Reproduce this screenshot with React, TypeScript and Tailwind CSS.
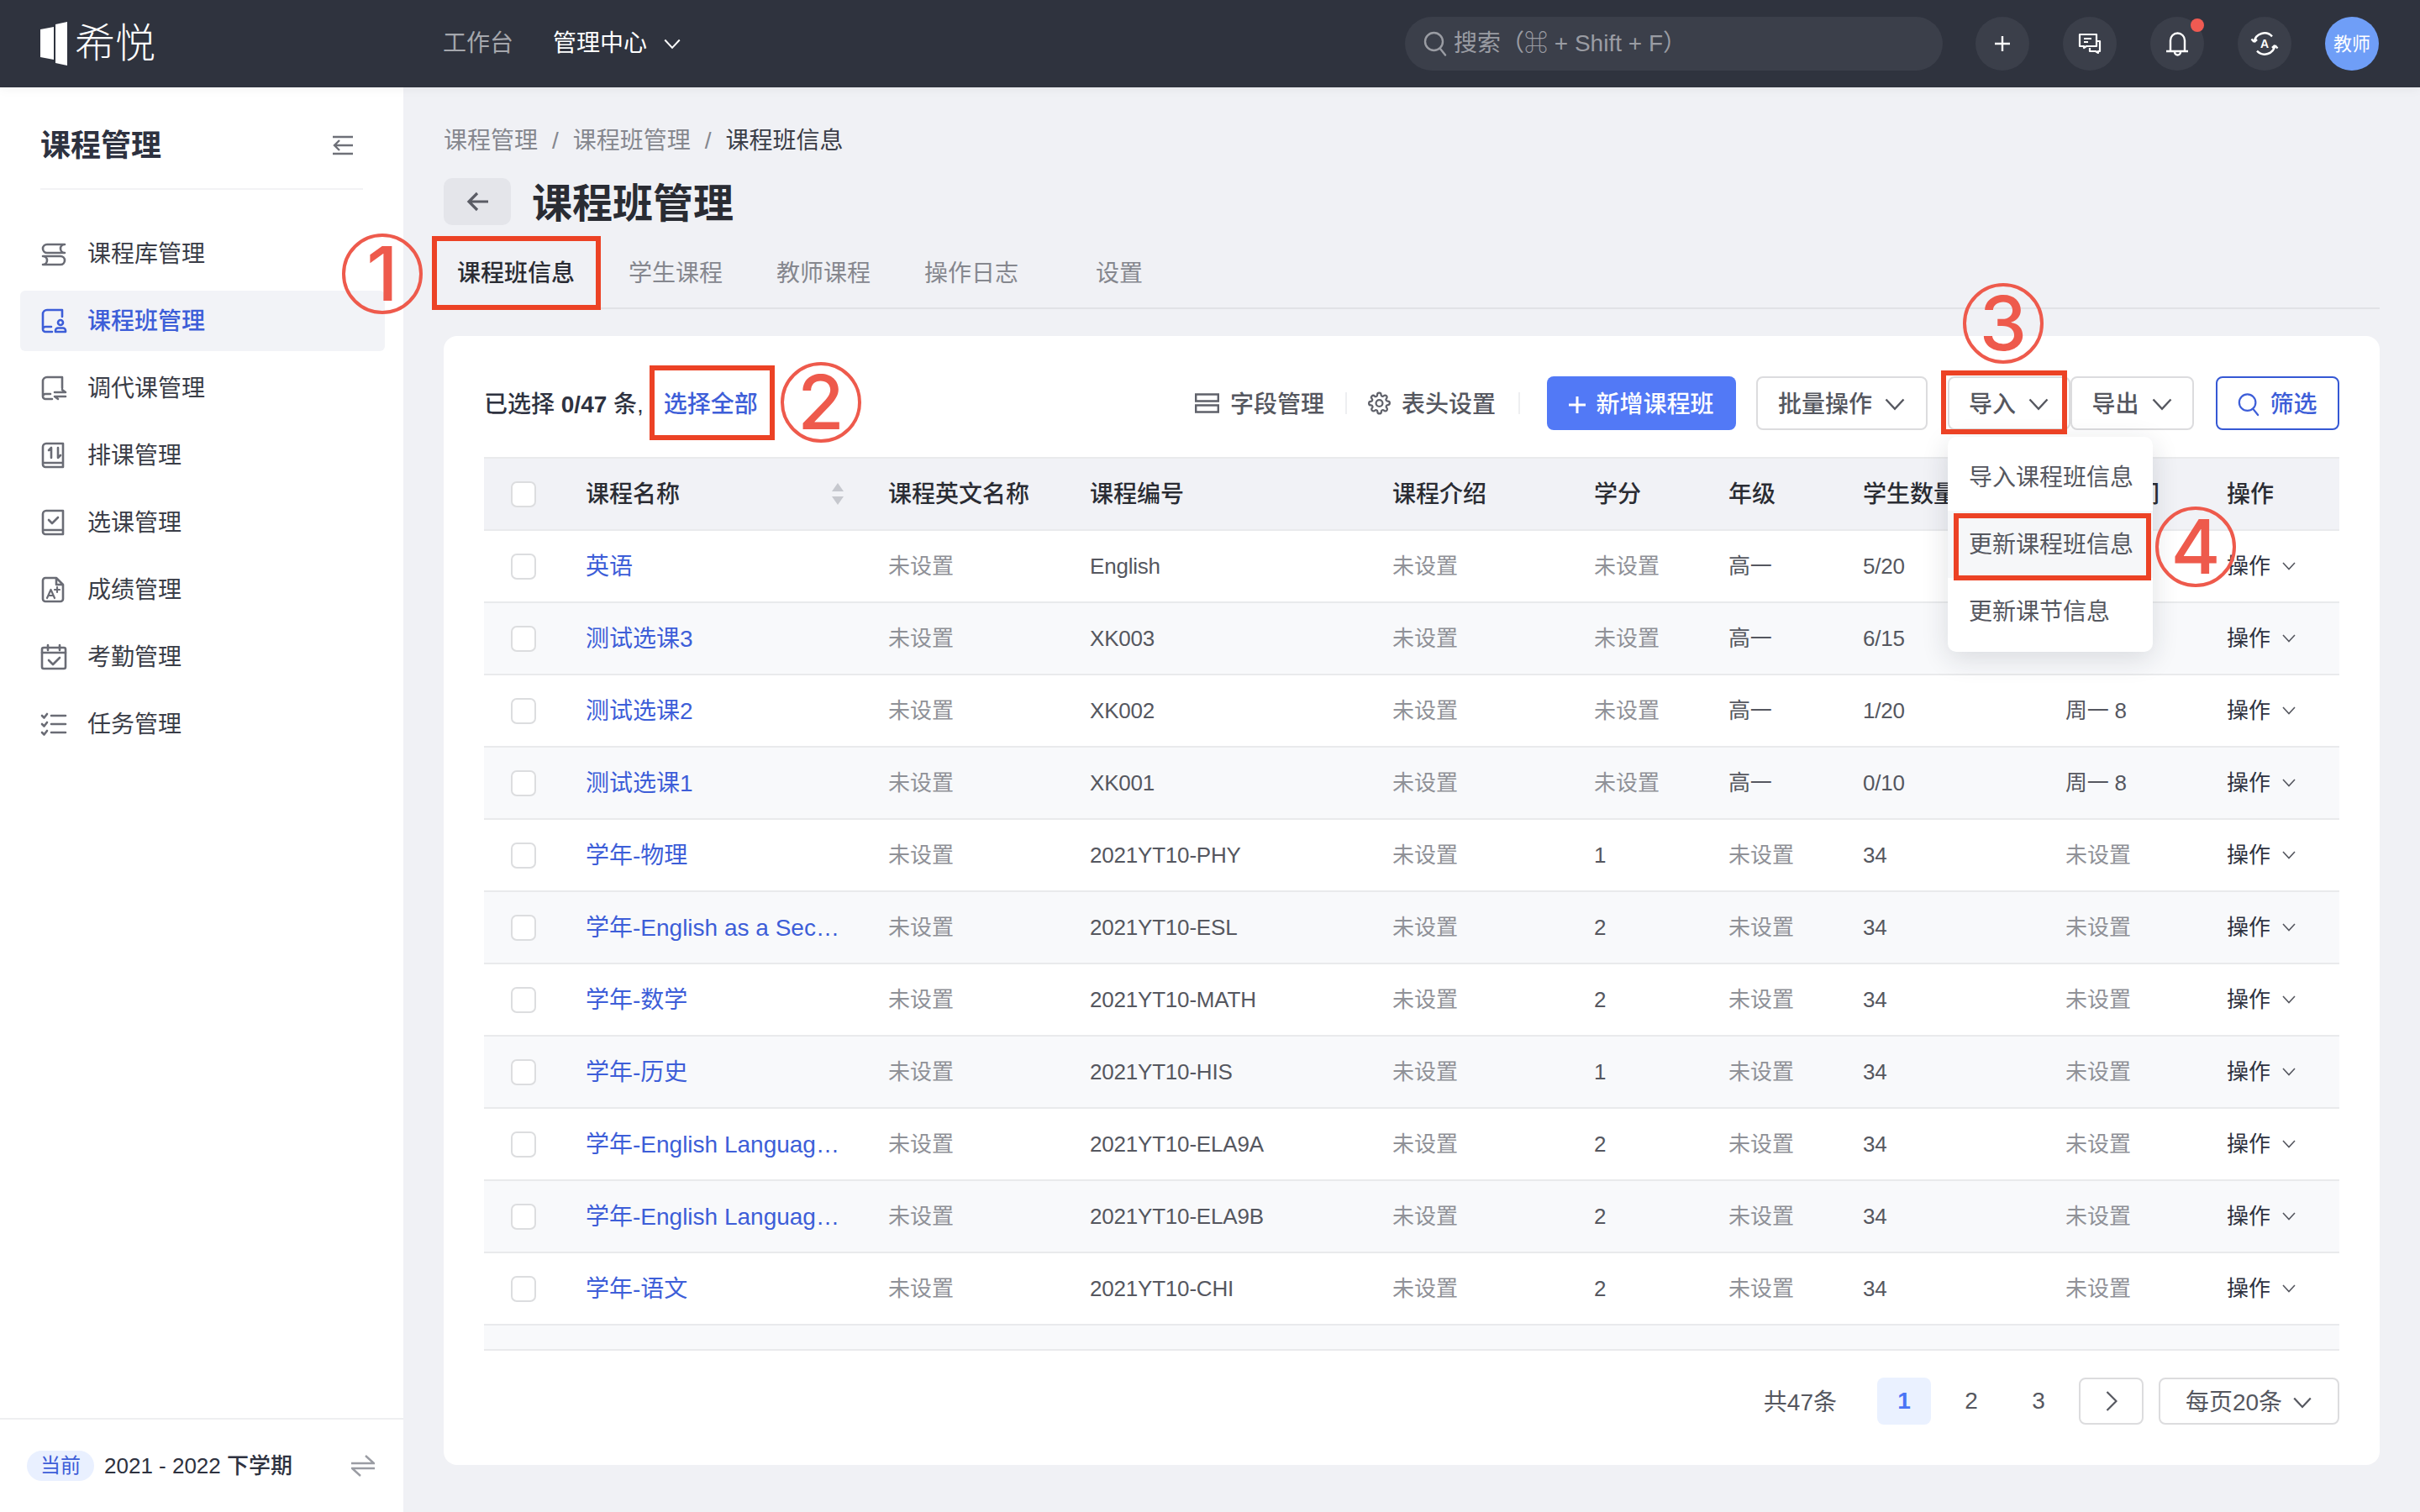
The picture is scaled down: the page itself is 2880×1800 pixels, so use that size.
import React from "react";

const MENU = [
  { label: "课程库管理", icon: "library" },
  { label: "课程班管理", icon: "classes", active: true },
  { label: "调代课管理", icon: "swap" },
  { label: "排课管理", icon: "sort" },
  { label: "选课管理", icon: "check" },
  { label: "成绩管理", icon: "grade" },
  { label: "考勤管理", icon: "calendar" },
  { label: "任务管理", icon: "tasks" },
];

const TABS = ["课程班信息", "学生课程", "教师课程", "操作日志"];

const NA = "未设置";

const ROWS = [
  ["英语", NA, "English", NA, NA, "高一", "5/20", "周一 8"],
  ["测试选课3", NA, "XK003", NA, NA, "高一", "6/15", "周一 8"],
  ["测试选课2", NA, "XK002", NA, NA, "高一", "1/20", "周一 8"],
  ["测试选课1", NA, "XK001", NA, NA, "高一", "0/10", "周一 8"],
  ["学年-物理", NA, "2021YT10-PHY", NA, "1", NA, "34", NA],
  ["学年-English as a Sec…", NA, "2021YT10-ESL", NA, "2", NA, "34", NA],
  ["学年-数学", NA, "2021YT10-MATH", NA, "2", NA, "34", NA],
  ["学年-历史", NA, "2021YT10-HIS", NA, "1", NA, "34", NA],
  ["学年-English Languag…", NA, "2021YT10-ELA9A", NA, "2", NA, "34", NA],
  ["学年-English Languag…", NA, "2021YT10-ELA9B", NA, "2", NA, "34", NA],
  ["学年-语文", NA, "2021YT10-CHI", NA, "2", NA, "34", NA],
];

const HEADERS = ["课程英文名称", "课程编号", "课程介绍", "学分", "年级", "学生数量", "上课时间"];

const GRID = "grid grid-cols-[121px_360px_240px_360px_240px_160px_160px_241px_192px_134px] items-center";

function Chevron({ className }: { className: string }) {
  return (
    <svg className={className} viewBox="0 0 16 10" fill="none" stroke="currentColor" strokeWidth="1.6">
      <path d="M1 1l7 7.5L15 1" />
    </svg>
  );
}

function SearchIcon({ className }: { className: string }) {
  return (
    <svg className={className} viewBox="0 0 28 30" fill="none" stroke="currentColor" strokeWidth="2.4">
      <circle cx="12.5" cy="12.5" r="10.5" />
      <path d="M20 21l6 7.5" strokeLinecap="round" />
    </svg>
  );
}

function MenuIcon({ name }: { name: string }) {
  const common = { fill: "none", stroke: "currentColor", strokeWidth: 2.6, strokeLinecap: "round" as const, strokeLinejoin: "round" as const };
  return (
    <svg className="w-[32px] h-[32px] shrink-0" viewBox="0 0 32 32" {...common}>
      {name === "library" && (
        <>
          <path d="M29 5H8a5 5 0 0 0 0 10h21a5 5 0 0 1 0-10" />
          <path d="M3 19h21a5 5 0 0 1 0 10H3a5 5 0 0 0 0-10" />
        </>
      )}
      {name === "classes" && (
        <>
          <path d="M26 11V3H8a5 5 0 0 0-5 5v18a3 3 0 0 0 3 3h8M3 26a3 3 0 0 1 3-3h7" />
          <circle cx="24" cy="18" r="3" />
          <path d="M18 29v-1.500a3 3 0 0 1 3-3h6a3 3 0 0 1 3 3V29z" />
        </>
      )}
      {name === "swap" && (
        <>
          <path d="M26 16V3H8a5 5 0 0 0-5 5v18a3 3 0 0 0 3 3h8M3 26a3 3 0 0 1 3-3h6" />
          <path d="M17 21h13l-4-3M30 26H17l4 3" />
        </>
      )}
      {name === "sort" && (
        <>
          <path d="M27 2H7a4 4 0 0 0-4 4v21a3 3 0 0 0 3 3h21zM3 25h24" />
          <path d="M10 10l3-3v12M21 7v12l3-3" />
        </>
      )}
      {name === "check" && (
        <>
          <path d="M27 2H7a4 4 0 0 0-4 4v21a3 3 0 0 0 3 3h21zM3 25h24" />
          <path d="M10 13l4 4 7-7" />
        </>
      )}
      {name === "grade" && (
        <>
          <path d="M19 2H6a3 3 0 0 0-3 3v22a3 3 0 0 0 3 3h18a3 3 0 0 0 3-3V10zM19 2v8h8" />
          <path d="M8 26l4.500-10L17 26M9.500 23h6M20 13v6M17 16h6" strokeWidth="2.200" />
        </>
      )}
      {name === "calendar" && (
        <>
          <rect x="2" y="5" width="28" height="25" rx="2" />
          <path d="M2 11h28M9 2v6M23 2v6M10 20l5 5 8-8" />
        </>
      )}
      {name === "tasks" && (
        <>
          <path d="M2 6l2.500 2.500L8 4M2 16l2.500 2.500L8 14M2 26l2.500 2.500L8 24" />
          <path d="M13 6h17M13 16h17M13 26h17" />
        </>
      )}
    </svg>
  );
}

function Checkbox() {
  return <div className="w-[30px] h-[31px] rounded-[7px] border-2 border-[#dcdddf] bg-white ml-[32px]" />;
}

function OutlineButton({ label, className }: { label: string; className: string }) {
  return (
    <button className={`h-[64px] pt-[3px] rounded-[8px] border-2 border-[#dcdcde] bg-white flex items-center justify-center gap-[14px] text-[28px] font-medium text-[#55575f] ${className}`}>
      {label}
      <Chevron className="w-[26px] h-[15px]" />
    </button>
  );
}

function Annotation({ digit, className }: { digit: string; className: string }) {
  return (
    <div className={`absolute w-[96px] h-[96px] rounded-full border-[4px] border-[#ee5a4c] flex items-center justify-center font-['Inter',sans-serif] font-medium text-[90px] leading-none text-[#ee5a4c] z-20 ${className}`}>
      {digit}
    </div>
  );
}

function TopBar() {
  return (
    <header className="h-[104px] shrink-0 bg-[#2f333e] flex items-center pl-[48px] pr-[48px] relative z-10 shadow-[0_2px_12px_rgba(0,0,0,0.05)] whitespace-nowrap">
      <div className="w-[479px] shrink-0 flex items-center gap-[8px]">
        <svg className="w-[33px] h-[52px]" viewBox="0 0 33 52" fill="#fff">
          <path d="M0 9l16-3v39l-16-3z" />
          <path d="M18 3l14-3v52l-14-3z" />
        </svg>
        <span className="text-[48px] leading-none font-light text-white">希悦</span>
      </div>
      <span className="text-[28px] text-[#a5a7ad]">工作台</span>
      <span className="ml-[47px] text-[28px] text-white">管理中心</span>
      <Chevron className="ml-[20px] w-[20px] h-[13px] text-white shrink-0" />
      <div className="ml-[862px] w-[640px] shrink-0 h-[64px] rounded-full bg-[#3b3f4a] flex items-center pl-[22px] gap-[8px] text-[#9a9ca3]">
        <SearchIcon className="w-[28px] h-[30px]" />
        <span className="text-[28px]">搜索（⌘ + Shift + F）</span>
      </div>
      <div className="ml-[39px] flex items-center gap-[40px]">
        <div className="w-[64px] h-[64px] rounded-full bg-[#3b3f4a]">
          <svg viewBox="0 0 64 64" fill="none" stroke="#fff" strokeWidth="2.400">
            <path d="M32 23v18M23 32h18" />
          </svg>
        </div>
        <div className="w-[64px] h-[64px] rounded-full bg-[#3b3f4a]">
          <svg viewBox="0 0 64 64" fill="none" stroke="#fff" strokeWidth="2.200" strokeLinejoin="round">
            <path d="M20 21h20v14H28l-3 2v-2h-5z" />
            <path d="M40 29h4v12h-2v2l-3-2h-7v-4" />
            <path d="M25 26h9M25 30h5" />
          </svg>
        </div>
        <div className="relative w-[64px] h-[64px] rounded-full bg-[#3b3f4a]">
          <svg viewBox="0 0 64 64" fill="none" stroke="#fff" strokeWidth="2.400">
            <path d="M24 41V28a8.500 8.500 0 0 1 17 0v13" />
            <path d="M19 41h26M29 42a3.500 3.500 0 0 0 7 0" />
          </svg>
          <span className="absolute left-[48px] top-[2px] w-[16px] h-[16px] rounded-full bg-[#ef5a52]" />
        </div>
        <div className="w-[64px] h-[64px] rounded-full bg-[#3b3f4a]">
          <svg viewBox="0 0 64 64" fill="none" stroke="#fff" strokeWidth="2.400">
            <path d="M19.600 30A12.500 12.500 0 0 1 41 23.300M44.400 34A12.500 12.500 0 0 1 23 40.700" />
            <path d="M19.600 30l-3.100-3.500M19.600 30l3.400-3M44.400 34l3.100 3.500M44.400 34l-3.400 3" />
            <text x="32" y="37" textAnchor="middle" fill="#fff" stroke="none" fontSize="14" fontWeight="700" fontFamily="Liberation Sans">A</text>
          </svg>
        </div>
        <div className="w-[64px] h-[64px] rounded-full bg-[#6f9ef7] flex items-center justify-center text-[22px] text-white">
          教师
        </div>
      </div>
    </header>
  );
}

function Sidebar() {
  return (
    <aside className="w-[480px] shrink-0 bg-white flex flex-col">
      <div className="mx-[48px] h-[122px] pt-[44px] border-b-2 border-[#f2f3f5] flex items-start justify-between">
        <h2 className="text-[36px] leading-[52px] font-semibold text-[#2e3240]">课程管理</h2>
        <svg className="w-[24px] h-[24px] mt-[13px] mr-[12px] text-[#6e7078]" viewBox="0 0 24 24" fill="none" stroke="currentColor" strokeWidth="2.400">
          <path d="M0 2h24M0 22h24M24 12H2M8 6l-6 6 6 6" />
        </svg>
      </div>
      <nav className="mt-[40px] flex flex-col gap-[8px] px-[24px]">
        {MENU.map((item) => (
          <div
            key={item.label}
            className={`h-[72px] w-[434px] rounded-[6px] flex items-center gap-[24px] pl-[24px] text-[28px] ${
              item.active ? "bg-[#f2f3f7] text-[#3d5ed8] font-medium" : "text-[#3a3d47]"
            }`}
          >
            <span className={item.active ? "text-[#3d5ed8]" : "text-[#6a6c75]"}>
              <MenuIcon name={item.icon} />
            </span>
            <span className="pt-[2px]">{item.label}</span>
          </div>
        ))}
      </nav>
      <div className="mt-auto h-[112px] border-t-2 border-[#eeeff1] flex items-center pl-[32px] pr-[34px]">
        <span className="h-[36px] w-[80px] rounded-full bg-[#e9f0ff] text-[#3d5ed8] text-[24px] flex items-center justify-center">当前</span>
        <span className="ml-[12px] text-[26px] font-medium text-[#2e3240]">2021 - 2022 下学期</span>
        <svg className="ml-auto w-[28px] h-[26px] text-[#9a9ca3]" viewBox="0 0 28 26" fill="none" stroke="currentColor" strokeWidth="2.400">
          <path d="M0 10h27L17 1M28 16H1l10 9" />
        </svg>
      </div>
    </aside>
  );
}

function Toolbar() {
  return (
    <div className="flex items-center justify-between h-[64px] text-[28px]">
      <div className="pt-[3px] font-medium text-[#2e3240] flex items-center">
        <span className="whitespace-pre">
          已选择 <span className="font-semibold">0/47</span> 条,
        </span>
        <span className="ml-[24px] text-[#3d5ed8]">选择全部</span>
      </div>
      <div className="flex items-center">
        <svg className="w-[29px] h-[24px] text-[#5f616a]" viewBox="0 0 29 24" fill="none" stroke="currentColor" strokeWidth="2.400">
          <path d="M1.200 1.500h26.600v8H1.200zM1.200 14.500h26.600v8H1.200z" />
        </svg>
        <span className="ml-[13px] pt-[3px] font-medium text-[#55575f]">字段管理</span>
        <span className="mx-[25px] w-[2px] h-[26px] bg-[#eeeff1]" />
        <svg className="w-[27px] h-[28px] text-[#5f616a]" viewBox="0 0 24 24" fill="none" stroke="currentColor" strokeWidth="2">
          <circle cx="12" cy="12" r="3.500" />
          <path d="M19.400 15a1.650 1.650 0 0 0 .33 1.820l.06.06a2 2 0 1 1-2.830 2.830l-.06-.06a1.650 1.650 0 0 0-2.800 1.170V21a2 2 0 0 1-4 0v-.09a1.650 1.650 0 0 0-2.800-1.130l-.06.06a2 2 0 1 1-2.830-2.830l.06-.06a1.650 1.650 0 0 0-1.170-2.800H3a2 2 0 0 1 0-4h.09a1.650 1.650 0 0 0 1.130-2.800l-.06-.06a2 2 0 1 1 2.830-2.830l.06.06a1.650 1.650 0 0 0 2.800-1.170V3a2 2 0 0 1 4 0v.09a1.650 1.650 0 0 0 2.800 1.130l.06-.06a2 2 0 1 1 2.830 2.830l-.06.06a1.650 1.650 0 0 0 1.170 2.800H21a2 2 0 0 1 0 4h-.09a1.650 1.650 0 0 0-1.510 1z" />
        </svg>
        <span className="ml-[13px] pt-[3px] font-medium text-[#55575f]">表头设置</span>
        <span className="ml-[27px] mr-[32px] w-[2px] h-[26px] bg-[#eeeff1]" />
        <button className="w-[225px] h-[64px] pt-[3px] rounded-[8px] bg-[#5279f6] text-white font-medium flex items-center justify-center gap-[12px]">
          <svg className="w-[20px] h-[20px]" viewBox="0 0 20 20" stroke="currentColor" strokeWidth="3">
            <path d="M10 0v20M0 10h20" />
          </svg>
          新增课程班
        </button>
        <OutlineButton label="批量操作" className="ml-[24px] w-[204px]" />
        <div className="relative ml-[24px]">
          <OutlineButton label="导入" className="w-[146px]" />
          <div className="absolute left-0 top-[72px] z-10 w-[244px] h-[256px] rounded-[10px] bg-white shadow-[0_8px_32px_rgba(30,34,50,0.14)] py-[8px] text-[28px] text-[#55575f]">
            <div className="h-[80px] pl-[25px] pt-[2px] flex items-center">导入课程班信息</div>
            <div className="h-[80px] pl-[25px] pt-[2px] flex items-center bg-[#f6f7f9]">更新课程班信息</div>
            <div className="h-[80px] pl-[25px] pt-[2px] flex items-center">更新课节信息</div>
          </div>
        </div>
        <OutlineButton label="导出" className="w-[147px]" />
        <button className="ml-[26px] w-[147px] h-[64px] pt-[3px] rounded-[8px] border-2 border-[#3558d4] bg-white text-[#3d5ed8] font-medium flex items-center justify-center gap-[12px]">
          <SearchIcon className="w-[26px] h-[29px]" />
          筛选
        </button>
      </div>
    </div>
  );
}

function TableArea() {
  return (
    <div className="mt-[32px] h-[1064px] overflow-hidden border-y-2 border-[#e9eaec]">
      <div className={`${GRID} h-[86px] bg-[#f1f2f6] border-b-2 border-[#e9eaec] text-[28px] font-medium text-[#2a2c33]`}>
        <Checkbox />
        <div className="flex items-center justify-between pr-[52px]">
          <span className="pt-[2px]">课程名称</span>
          <svg className="w-[16px] h-[26px]" viewBox="0 0 16 26" fill="#c6c8ce">
            <path d="M8 0l7 10H1zM8 26L1 16h14z" />
          </svg>
        </div>
        {HEADERS.map((h) => (
          <div key={h} className="pt-[2px] whitespace-nowrap">{h}</div>
        ))}
        <div className="pt-[2px]">操作</div>
      </div>
      {ROWS.map((row, i) => (
        <div key={i} className={`${GRID} h-[86px] border-b-2 border-[#e9eaec] text-[26px] ${i % 2 ? "bg-[#f8f9fb]" : "bg-white"}`}>
          <Checkbox />
          <div className="pt-[2px] text-[28px] text-[#3d5ed8] whitespace-nowrap">{row[0]}</div>
          {row.slice(1).map((cell, j) => (
            <div key={j} className={`whitespace-nowrap ${cell === NA ? "text-[#8f9197]" : "text-[#55575f] tracking-[-0.2px]"}`}>{cell}</div>
          ))}
          <div className="flex items-center gap-[14px] text-[#2e3240]">
            操作
            <Chevron className="w-[16px] h-[10px] text-[#55575f]" />
          </div>
        </div>
      ))}
      <div className={`${GRID} h-[86px] bg-[#f8f9fb]`}>
        <Checkbox />
      </div>
    </div>
  );
}

function Pagination() {
  return (
    <div className="mt-[32px] h-[56px] flex items-center justify-end text-[28px] text-[#55575f]">
      <span className="pt-[3px]">共47条</span>
      <span className="ml-[48px] w-[64px] h-[56px] rounded-[8px] bg-[#eaf1ff] text-[#4a74f5] font-semibold flex items-center justify-center">1</span>
      <span className="ml-[16px] w-[64px] text-center">2</span>
      <span className="ml-[16px] w-[64px] text-center">3</span>
      <button className="ml-[16px] w-[77px] h-[56px] rounded-[8px] border-2 border-[#dcdcde] flex items-center justify-center">
        <svg className="w-[14px] h-[24px]" viewBox="0 0 14 24" fill="none" stroke="currentColor" strokeWidth="2.200">
          <path d="M1.500 1l11 11-11 11" />
        </svg>
      </button>
      <button className="ml-[18px] w-[215px] h-[56px] pt-[3px] rounded-[8px] border-2 border-[#dcdcde] flex items-center justify-center gap-[12px]">
        每页20条
        <Chevron className="w-[24px] h-[14px]" />
      </button>
    </div>
  );
}

export default function App() {
  return (
    <div className="relative w-[2880px] h-[1800px] overflow-hidden flex flex-col bg-[#f0f1f5] font-['Liberation_Sans','Noto_Sans_CJK_SC',sans-serif]">
      <TopBar />
      <div className="flex-1 flex min-h-0">
        <Sidebar />
        <main className="flex-1 px-[48px]">
          <div className="mt-[44px] h-[40px] flex items-center gap-[17px] text-[28px] text-[#85878e]">
            <span>课程管理</span>
            <span>/</span>
            <span>课程班管理</span>
            <span>/</span>
            <span className="text-[#3a3d47]">课程班信息</span>
          </div>
          <div className="mt-[24px] h-[56px] flex items-center gap-[25px]">
            <button className="w-[80px] h-[56px] rounded-[10px] bg-[#e4e5ea] flex items-center justify-center">
              <svg className="w-[26px] h-[24px] text-[#5a5c65]" viewBox="0 0 26 24" fill="none" stroke="currentColor" strokeWidth="3.200">
                <path d="M26 12H3M13 2L3 12l10 10" />
              </svg>
            </button>
            <h1 className="pt-[5px] text-[48px] font-bold text-[#2a2c33] leading-none">课程班管理</h1>
          </div>
          <div className="mt-[12px] h-[88px] pt-[5px] border-b-2 border-[#e1e2e6] flex items-center pl-[16px] gap-[64px] text-[28px] text-[#85878e]">
            {TABS.map((t, i) => (
              <span key={t} className={i === 0 ? "font-medium text-[#2a2c33]" : ""}>{t}</span>
            ))}
            <span className="ml-[28px]">设置</span>
          </div>
          <section className="mt-[32px] h-[1344px] rounded-[16px] bg-white px-[48px] pt-[48px]">
            <Toolbar />
            <TableArea />
            <Pagination />
          </section>
        </main>
      </div>

      <div className="absolute left-[514px] top-[281px] w-[201px] h-[88px] border-[6px] border-[#ec4225] z-20" />
      <div className="absolute left-[773px] top-[435px] w-[149px] h-[89px] border-[6px] border-[#ec4225] z-20" />
      <div className="absolute left-[2310px] top-[441px] w-[150px] h-[76px] border-[6px] border-[#ec4225] z-20" />
      <div className="absolute left-[2325px] top-[611px] w-[235px] h-[80px] border-[6px] border-[#ec4225] z-20" />
      <Annotation digit="1" className="left-[407px] top-[278px]" />
      <Annotation digit="2" className="left-[929px] top-[431px]" />
      <Annotation digit="3" className="left-[2336px] top-[337px]" />
      <Annotation digit="4" className="left-[2565px] top-[603px]" />
    </div>
  );
}
